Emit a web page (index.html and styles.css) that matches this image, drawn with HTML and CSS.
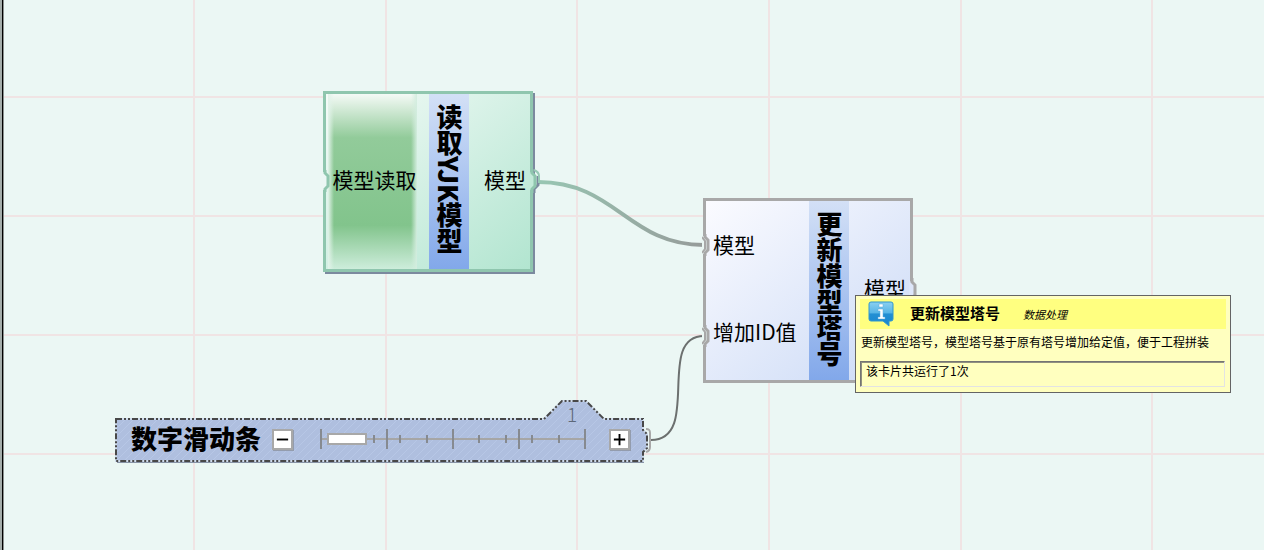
FILE: index.html
```html
<!DOCTYPE html>
<html lang="zh-CN">
<head>
<meta charset="utf-8">
<title>数据处理</title>
<link rel="stylesheet" href="styles.css">
</head>
<body>
<main class="canvas">
  <svg class="layer" aria-hidden="true">
    <g class="grid">
      <path d="M194 0V3000M386 0V3000M577 0V3000M769 0V3000M961 0V3000M1152 0V3000"/>
      <path d="M4 97H4000M4 216H4000M4 335H4000M4 454H4000"/>
    </g>
    <defs>
      <linearGradient id="wire" gradientUnits="userSpaceOnUse" x1="536" y1="0" x2="706" y2="0">
        <stop offset="0" stop-color="#98c7b3"/><stop offset="1" stop-color="#969a99"/>
      </linearGradient>
    </defs>
    <path d="M538 182C616 182 628 245 704 245" fill="none" stroke="url(#wire)" stroke-width="4"/>
    <path d="M651 440C702 440 655 336 704 336" fill="none" stroke="#6c706f" stroke-width="2"/>
  </svg>

  <section class="node node-read">
    <div class="inputs"><button class="read-button" type="button">模型读取</button></div>
    <h2 class="name">读取YJK模型</h2>
    <div class="outputs"><span>模型</span></div>
    <svg class="port port-in" viewBox="0 0 16 26" aria-hidden="true">
      <path d="M0 4H2L6 8V18L2 22H0Z" fill="#ebf7f4"/>
      <path d="M3 2V5L6 8V18L3 21V24" fill="none" stroke="#8fc6ae" stroke-width="3"/>
    </svg>
    <svg class="port port-out" viewBox="0 0 16 26" aria-hidden="true">
      <path d="M7 25V21L11 17V8" fill="none" stroke="#7b8a9e" stroke-width="3"/>
      <path d="M2 3L8 8V18L2 23Z" fill="#c3ead9"/>
      <path d="M5 1V5L8 8V18L5 21V25" fill="none" stroke="#8fc6ae" stroke-width="3"/>
      <path d="M7 2Q12 4 12 8V15" fill="none" stroke="#98c9b5" stroke-width="2"/>
    </svg>
  </section>

  <section class="node node-update">
    <div class="inputs"><span>模型</span><span>增加ID值</span></div>
    <h2 class="name">更新模型塔号</h2>
    <div class="outputs"><span>模型</span></div>
    <svg class="port port-in port-first" viewBox="0 0 16 26" aria-hidden="true">
      <path d="M0 4H2L6 8V18L2 22H0Z" fill="#ebf7f4"/>
      <path d="M3 2V5L6 8V18L3 21V24" fill="none" stroke="#a8a8a8" stroke-width="3"/>
      <path d="M0 5L3 9V17L0 21" fill="none" stroke="#a8a8a8" stroke-width="2"/>
    </svg>
    <svg class="port port-in port-second" viewBox="0 0 16 26" aria-hidden="true">
      <path d="M0 4H2L6 8V18L2 22H0Z" fill="#ebf7f4"/>
      <path d="M3 2V5L6 8V18L3 21V24" fill="none" stroke="#a8a8a8" stroke-width="3"/>
      <path d="M0 5L3 9V17L0 21" fill="none" stroke="#a8a8a8" stroke-width="2"/>
    </svg>
    <svg class="port port-out" viewBox="0 0 16 26" aria-hidden="true">
      <path d="M2 3L8 8V18L2 23Z" fill="#dde6f9"/>
      <path d="M5 1V5L8 8V18L5 21V25" fill="none" stroke="#a8a8a8" stroke-width="3"/>
    </svg>
  </section>

  <section class="slider-node">
    <svg class="slider-shape" viewBox="0 0 540 66" aria-hidden="true">
      <defs>
        <pattern id="hatch" width="8" height="8" patternUnits="userSpaceOnUse">
          <rect width="8" height="8" fill="#afbfdf"/>
          <path d="M0 8L8 0" stroke="#b7c7e6"/>
        </pattern>
        <path id="outline" d="M2 20H430L448 2H472L490 20H529V31L533 35V49L529 53V62H2Z"/>
      </defs>
      <path d="M3 63H530" stroke="#8793a6" stroke-width="2"/>
      <use href="#outline" fill="url(#hatch)" stroke="#cfdcee" stroke-width="2"/>
      <use href="#outline" fill="none" stroke="#484848" stroke-width="2" stroke-dasharray="6 2 2 2 2 2"/>
      <path d="M532 30C536 30 536 32 536 34V48Q536 52 532 53" fill="none" stroke="#a8a8a8" stroke-width="2"/>
    </svg>
    <output class="slider-value" for="amount">1</output>
    <div class="slider-row">
      <label class="slider-label" for="amount">数字滑动条</label>
      <button class="step" type="button" aria-label="减少"><svg viewBox="0 0 16 16"><path d="M2 8H14"/></svg></button>
      <div class="track">
        <svg class="ticks" viewBox="0 0 303 20" aria-hidden="true">
          <path d="M20 10H284" stroke="#a6a6a6"/>
          <path d="M20 0V20M86 0V20M152 0V20M218 0V20M284 0V20M73 6V14M99 6V14M126 6V14M178 6V14M205 6V14M231 6V14M258 6V14" stroke="#868a90"/>
        </svg>
        <input id="amount" class="range" type="range" min="0" max="10" value="1">
      </div>
      <button class="step" type="button" aria-label="增加"><svg viewBox="0 0 16 16"><path d="M2 8H14M8 2V14"/></svg></button>
    </div>
  </section>

  <aside class="tip" role="tooltip">
    <header class="tip-head">
      <svg class="info" viewBox="0 0 26 26" aria-hidden="true">
        <defs>
          <linearGradient id="bubble" x1="0" y1="0" x2="0" y2="1">
            <stop offset="0" stop-color="#8bd0f0"/><stop offset=".45" stop-color="#57b5e6"/>
            <stop offset=".5" stop-color="#238fd3"/><stop offset="1" stop-color="#1786cf"/>
          </linearGradient>
        </defs>
        <path d="M3 1H23Q25 1 25 3V18Q25 20 23 20H21V25L15 20H3Q1 20 1 18V3Q1 1 3 1Z" fill="url(#bubble)" stroke="#3197cf"/>
        <path d="M11 3H15V6H11ZM10 8H15V16H17V18H10V16H12V10H10Z" fill="#fff" stroke="#5caadb" stroke-width=".5"/>
      </svg>
      <strong class="tip-title">更新模型塔号</strong>
      <em class="tip-category">数据处理</em>
    </header>
    <p class="tip-text">更新模型塔号，模型塔号基于原有塔号增加给定值，便于工程拼装</p>
    <p class="tip-status">该卡片共运行了1次</p>
  </aside>
</main>
</body>
</html>
```
FILE: styles.css
```css
* { box-sizing: border-box; }

body {
  margin: 0;
  font-family: "Noto Sans CJK SC", sans-serif;
  color: #000;
}

button { font: inherit; color: inherit; }

.canvas {
  position: relative;
  min-height: 100vh;
  overflow: hidden;
  background: linear-gradient(to right, #a5aeab 0 2px, #000 2px 3px, #8b918f 3px 4px, #ebf7f4 4px);
}

.layer {
  position: absolute;
  inset: 0;
  width: 100%;
  height: 100%;
}

.grid { stroke: #f0e4e4; stroke-width: 2; fill: none; }

/* Nodes */
.node {
  position: absolute;
  display: grid;
  grid-template-columns: 1fr 40px 61px;
  border: 3px solid #a8a8a8;
  font-size: 21px;
  line-height: 24px;
}

.node-read {
  left: 323px;
  top: 91px;
  width: 210px;
  height: 181px;
  border-color: #8fc6ae;
  background: linear-gradient(140deg, #f4fbf8, #b2e5d0);
  box-shadow: 2px 2px #7b8a9e;
}

.node-update {
  left: 703px;
  top: 198px;
  width: 210px;
  height: 185px;
  background: linear-gradient(140deg, #fbfbff, #cbdaf6);
}

.name {
  display: flex;
  align-items: center;
  justify-content: center;
  margin: 0;
  padding-bottom: 4px;
  writing-mode: vertical-rl;
  background: linear-gradient(#d3e0f6, #82a8ea);
  font-size: 26px;
  font-weight: 900;
  line-height: 40px;
}

.inputs, .outputs {
  display: flex;
  flex-direction: column;
}

.node-update .inputs {
  justify-content: space-around;
  padding: 0 0 6px 7px;
}

.outputs {
  align-items: flex-end;
  justify-content: center;
  padding: 0 4px 6px 0;
}

.read-button {
  flex: 1;
  margin-left: 2px;
  margin-right: 12px;
  padding: 0 0 6px 4px;
  border: 0;
  white-space: nowrap;
  background:
    linear-gradient(to right, #e2f3ea, transparent 6px calc(100% - 6px), #d3eddf),
    linear-gradient(#f4faf6, #92cb9a 25%, #82c48c 75%, #cdeddb);
}

.port {
  position: absolute;
  width: 16px;
  height: 26px;
}

.port-in { left: -4px; top: 74px; }
.port-out { right: -13px; top: 74px; }
.port-first { top: 31px; }
.port-second { top: 122px; }
.node-update .port-out { top: 76px; }

/* Number slider */
.slider-node {
  position: absolute;
  left: 114px;
  top: 399px;
  width: 540px;
  height: 66px;
  padding-top: 20px;
}

.slider-shape {
  position: absolute;
  inset: 0;
  width: 100%;
  height: 100%;
}

.slider-value {
  position: absolute;
  left: 453px;
  top: 3px;
  font-size: 19px;
  font-weight: 300;
  line-height: 24px;
  color: #5d6878;
}

.slider-row {
  position: relative;
  display: flex;
  align-items: center;
  height: 40px;
  padding-left: 17px;
}

.slider-label {
  width: 141px;
  padding-bottom: 3px;
  font-size: 26px;
  font-weight: 900;
  line-height: 37px;
  white-space: nowrap;
}

.step {
  display: flex;
  width: 21px;
  height: 21px;
  padding: 1px;
  border: 2px solid #a8a8a8;
  background: #fff;
  box-shadow: 1px 1px #939cad;
}

.step svg { width: 100%; fill: none; stroke: #000; stroke-width: 2; }

.track {
  display: grid;
  align-items: center;
  width: 303px;
  height: 20px;
  margin: 0 5px 0 8px;
}

.ticks, .range { grid-area: 1 / 1; }

.ticks { width: 303px; height: 20px; stroke-width: 2; }

.range {
  width: 303px;
  height: 12px;
  margin: 0;
  appearance: none;
  background: transparent;
}

.range::-webkit-slider-thumb {
  appearance: none;
  width: 40px;
  height: 12px;
  border: 2px solid #a8a8a8;
  background: #fff;
}

/* Tooltip */
.tip {
  position: absolute;
  left: 855px;
  top: 295px;
  width: 376px;
  padding: 3px 4px 5px;
  border: 1px solid #646464;
  background: #ffffbf;
  font-size: 12px;
  line-height: 16px;
}

.tip-head {
  display: flex;
  align-items: center;
  height: 30px;
  padding-left: 8px;
  background: #ffff80;
}

.info { width: 26px; height: 26px; margin-right: 16px; }

.tip-title { padding-bottom: 2px; font-size: 15px; }

.tip-category { margin-left: 23px; font-size: 11px; }

.tip-text { margin: 5px 1px 11px; white-space: nowrap; }

.tip-status {
  height: 26px;
  margin: 0 1px 0 0;
  padding: 1px 5px;
  border: 1px solid;
  border-color: #747474 #e3e3e3 #e3e3e3 #747474;
  box-shadow: inset 1px 1px #909080;
}
```
